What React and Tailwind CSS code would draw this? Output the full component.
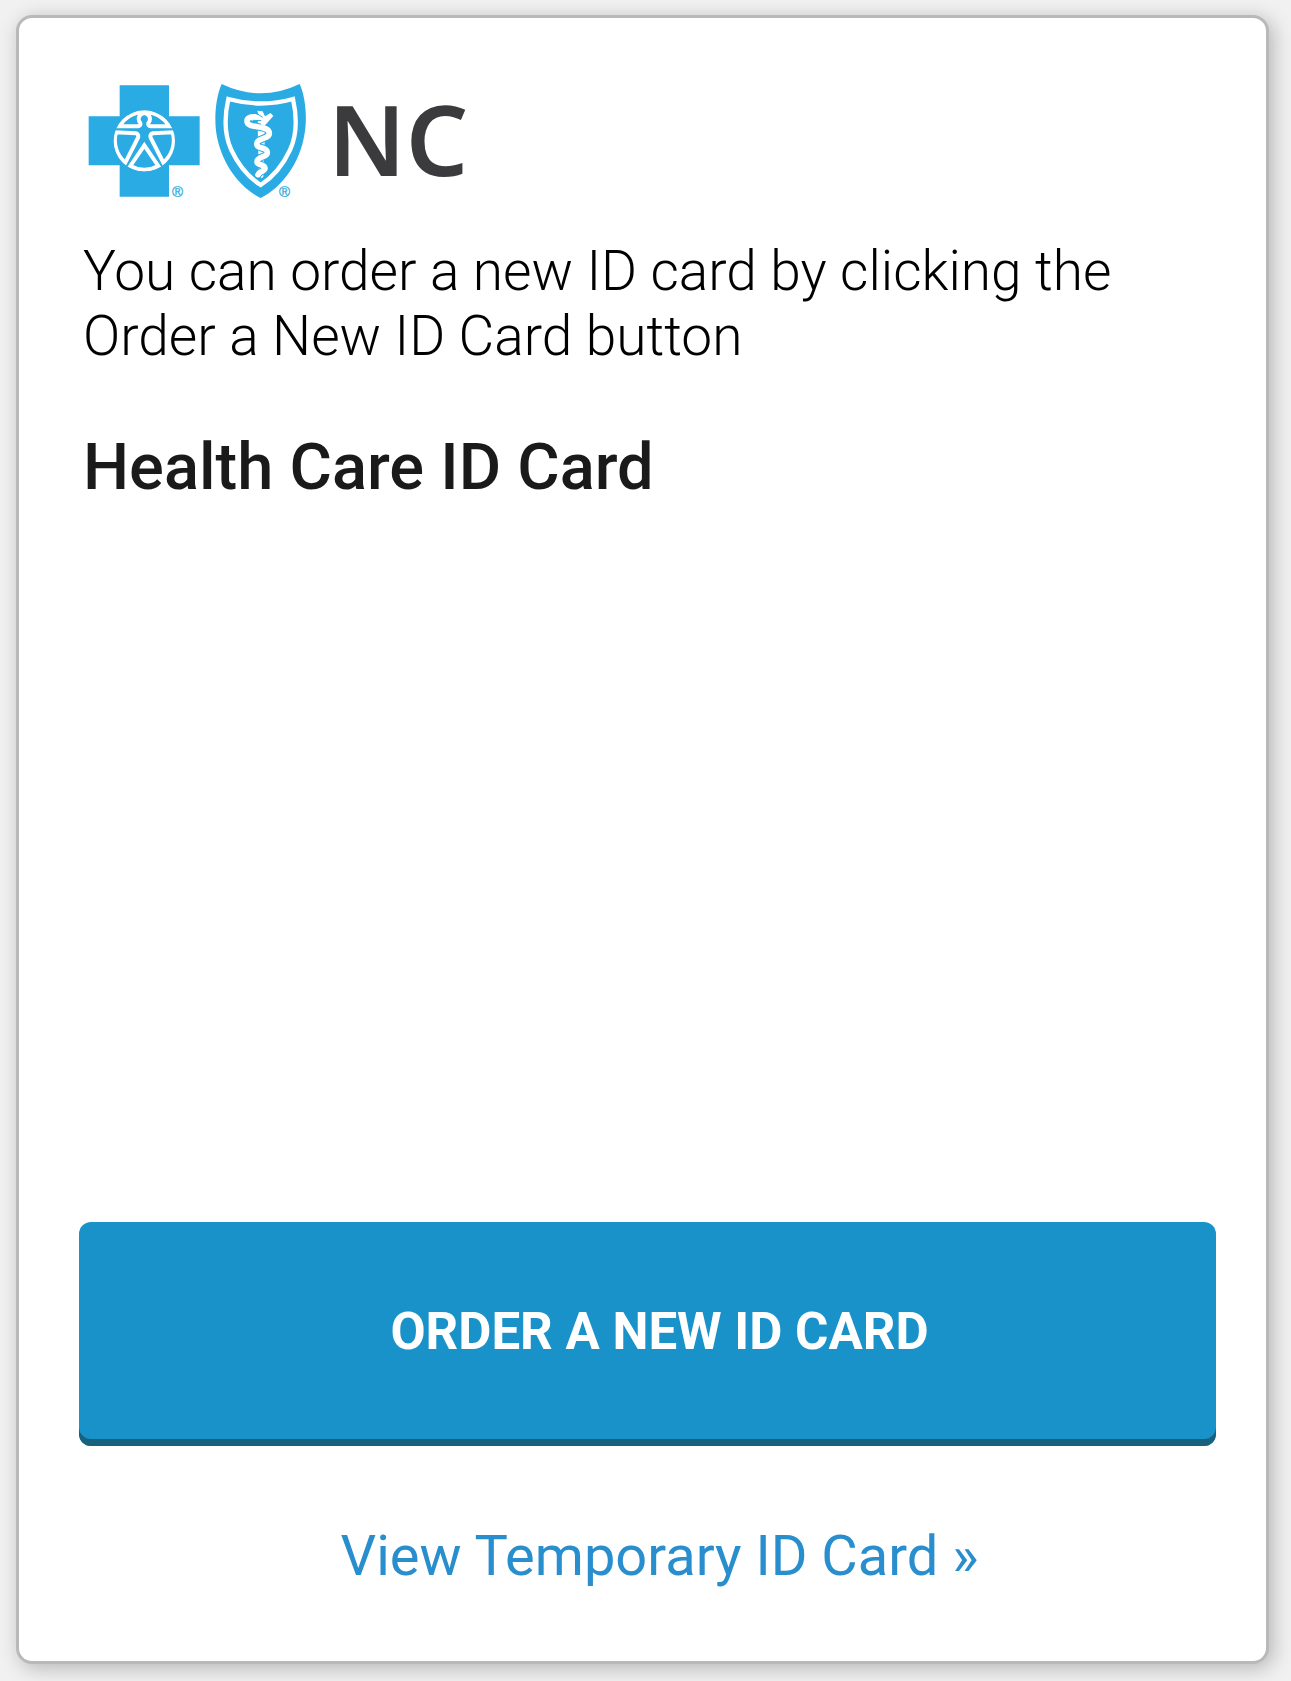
const SNAKE =
  "M168 144C150 136 138 146 142 158C148 176 208 164 208 190C208 208 170 204 170 222C170 238 202 228 202 248C202 263 171 258 171 275C171 288 195 280 195 295C195 304 180 302 174 314";

function Logo() {
  return (
    <svg
      viewBox="83 50 400 160"
      role="img"
      aria-label="Blue Cross Blue Shield NC"
      className="h-[160px] w-[400px]"
    >
      <clipPath id="figure-disc">
        <circle cx="223" cy="213" r="92" />
      </clipPath>
      <g transform="translate(70 70) scale(0.33333)">
        <path fill="#2aabe3" d="M149 46H297V139H389V286H297V380H149V286H56V139H149Z" />
        <g fill="none" stroke="#fff" strokeWidth="12" clipPath="url(#figure-disc)">
          <path d="M148 169A87 87 0 0 1 298 169H243Q233 167 235 159A17 17 0 1 0 211 159Q213 167 203 169Z" />
          <path d="M138 187A87 87 0 0 0 166 278L204 203Q207 192 197 190Z" />
          <path d="M308 187A87 87 0 0 1 280 278L242 203Q239 192 249 190Z" />
          <path d="M181 288A87 87 0 0 0 265 288L223 226Z" />
        </g>
      </g>
      <g transform="translate(200 70) scale(0.33333)">
        <path
          fill="#2aabe3"
          d="M65 42Q182 98 299 42C318 84 322 150 313 195C300 275 250 350 182 384C114 350 64 275 50 195C42 150 46 84 65 42Z"
        />
        <path
          fill="none"
          stroke="#fff"
          strokeWidth="13"
          d="M85 87Q182 114 279 87C291 140 292 192 270 240C248 287 218 322 182 345C146 322 116 287 94 240C72 192 73 140 85 87Z"
        />
        <path fill="#fff" d="M173 150H194V215L190 320L185 325L177 318L174 215Z" />
        <g fill="none" strokeLinecap="round">
          <path stroke="#2aabe3" strokeWidth="23" d={SNAKE} />
          <path stroke="#fff" strokeWidth="17" d={SNAKE} />
        </g>
        <path fill="#fff" d="M184 165L172 122L188 124L195 139L212 129L220 138L194 167Z" />
        <path fill="#fff" d="M142 142C152 129 166 130 177 136L188 147L178 154L156 152Z" />
        <path fill="none" stroke="#2aabe3" strokeWidth="3" d="M158 151L184 152M173 132L188 142" />
      </g>
      <g fill="#2aabe3" stroke="#2aabe3" strokeWidth="0.3" fontFamily="Liberation Sans, sans-serif" fontSize="15">
        <text x="172" y="197">®</text>
        <text x="279" y="197">®</text>
      </g>
      <text x="328" y="176" fill="#3b3b3d" fontFamily="Noto Sans, sans-serif" fontWeight="600" fontSize="98">
        NC
      </text>
    </svg>
  );
}

export default function App() {
  return (
    <div className="flex min-h-screen flex-col bg-[#f1f1f1] pt-[15px] pr-[22px] pb-[17px] pl-4 font-[Roboto,sans-serif]">
      <main className="flex grow flex-col rounded-2xl border-[3px] border-[#b9b9b9] bg-white pt-8 pr-[50px] pb-[72px] pl-[60px] shadow-[4px_4px_20px_rgba(0,0,0,0.25)]">
        <div className="flex flex-col pl-1">
          <Logo />
          <p className="mt-[29px] max-w-[1080px] text-[55px] leading-[65px] font-light text-black">
            You can order a new ID card by clicking the Order a New ID Card button
          </p>
          <h1 className="mt-[60px] text-[65px] leading-[76px] font-medium text-[#1a1a1a]">Health Care ID Card</h1>
        </div>
        <button
          type="button"
          className="mt-auto h-[224px] rounded-xl bg-[#1992ca] pb-1 pl-6 text-[51px] font-bold text-white shadow-[inset_0_-7px_0_#17617f]"
        >
          ORDER A NEW ID CARD
        </button>
        <a href="#temporary-card" className="mt-[78px] self-center pl-6 text-[56px] leading-[65px] text-[#298ece]">
          View Temporary ID Card »
        </a>
      </main>
    </div>
  );
}
